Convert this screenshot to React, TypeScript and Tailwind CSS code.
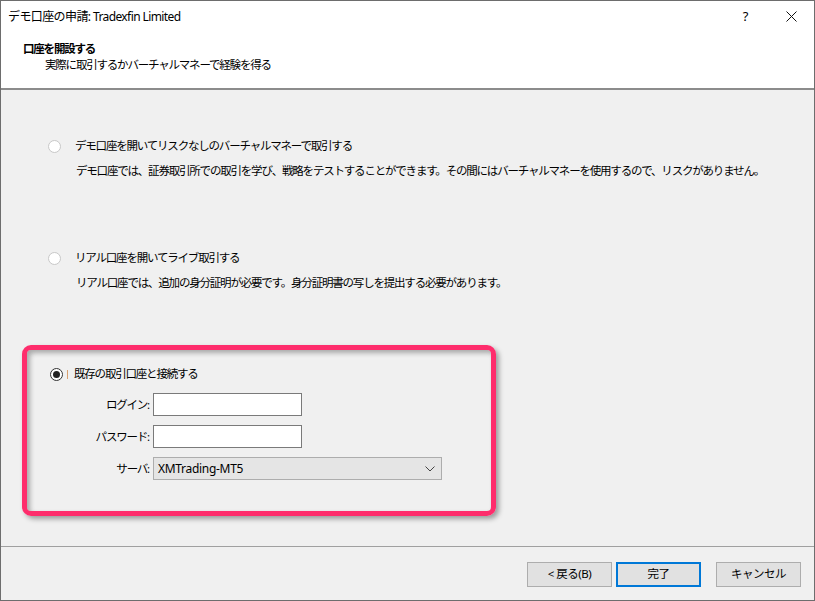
import React from 'react';

const font = { fontFamily: '"Segoe UI", "Noto Sans", "Noto Sans CJK JP", sans-serif' };

function Radio({ checked }: { checked?: boolean }) {
  return (
    <span
      className={
        'flex h-[13px] w-[13px] shrink-0 items-center justify-center rounded-full border bg-white ' +
        (checked ? 'border-[#333333]' : 'border-[#c8c8c8]')
      }
    >
      {checked && <span className="h-[7px] w-[7px] rounded-full bg-[#222222]" />}
    </span>
  );
}

function Field({ label, children }: { label: string; children: React.ReactNode }) {
  return (
    <div className="flex items-center">
      <span className="w-[152px] pr-[4px] text-right">{label}</span>
      {children}
    </div>
  );
}

function Button({ children, primary }: { children: React.ReactNode; primary?: boolean }) {
  return (
    <button
      className={
        'flex h-[25px] w-[85px] items-center justify-center bg-[#e1e1e1] tracking-[-0.5px] text-[#000] ' +
        (primary ? 'border-2 border-[#0078d7]' : 'border border-[#adadad]')
      }
    >
      {children}
    </button>
  );
}

export default function App() {
  return (
    <div
      className="relative flex h-[601px] w-[815px] flex-col overflow-hidden border border-[#6d6d6d] bg-[#f0f0f0] text-[11.5px] tracking-[-1.2px] text-[#000]"
      style={font}
    >
      {/* Title bar */}
      <div className="flex h-[31px] shrink-0 items-center bg-white pl-[7px]">
        <span className="flex-1 text-[12px] tracking-[-0.6px]">デモ口座の申請: Tradexfin Limited</span>
        <span className="w-[46px] text-center text-[13px]">?</span>
        <span className="flex w-[46px] items-center justify-center">
          <svg width="11" height="11" viewBox="0 0 11 11" stroke="#111" strokeWidth="1">
            <path d="M0.5 0.5 L10.5 10.5 M10.5 0.5 L0.5 10.5" />
          </svg>
        </span>
      </div>

      {/* Header */}
      <div className="flex h-[58px] shrink-0 flex-col border-b-2 border-[#8c8c8c] bg-white pl-[22px] pt-[9px]">
        <span className="font-bold leading-[16px]">口座を開設する</span>
        <span className="pl-[22px] leading-[16px]">実際に取引するかバーチャルマネーで経験を得る</span>
      </div>

      {/* Body */}
      <div className="relative flex flex-1 flex-col pl-[47px]">
        <div className="mt-[48px] flex items-center gap-[14px] leading-[16px]">
          <Radio />
          <span>デモ口座を開いてリスクなしのバーチャルマネーで取引する</span>
        </div>
        <div className="mt-[9px] pl-[28px] leading-[16px]">
          デモ口座では、証券取引所での取引を学び、戦略をテストすることができます。その間にはバーチャルマネーを使用するので、リスクがありません。
        </div>

        <div className="mt-[71px] flex items-center gap-[14px] leading-[16px]">
          <Radio />
          <span>リアル口座を開いてライブ取引する</span>
        </div>
        <div className="mt-[9px] pl-[28px] leading-[16px]">
          リアル口座では、追加の身分証明が必要です。身分証明書の写しを提出する必要があります。
        </div>

        <div className="mt-[75px] flex items-center leading-[16px]">
          <span className="ml-[2px]">
            <Radio checked />
          </span>
          <span className="ml-[4px] mr-[6px] h-[9px] w-px bg-[#d9a070]" />
          <span>既存の取引口座と接続する</span>
        </div>

        <div className="-ml-[47px] mt-[11px] flex flex-col gap-[9px]">
          <Field label="ログイン:">
            <span className="h-[23px] w-[149px] border border-[#7a7a7a] bg-white" />
          </Field>
          <Field label="パスワード:">
            <span className="h-[23px] w-[149px] border border-[#7a7a7a] bg-white" />
          </Field>
          <Field label="サーバ:">
            <span className="flex h-[23px] w-[289px] items-center justify-between border border-[#adadad] bg-[#e5e5e5] pl-[4px] pr-[6px] tracking-[-0.3px]">
              <span className="text-[12px]">XMTrading-MT5</span>
              <svg width="10" height="6" viewBox="0 0 10 6" fill="none" stroke="#444" strokeWidth="1">
                <path d="M0.5 0.5 L5 5 L9.5 0.5" />
              </svg>
            </span>
          </Field>
        </div>

        {/* annotation frame */}
        <div className="pointer-events-none absolute left-[21px] top-[255px] h-[171px] w-[474px] rounded-[9px] border-[5px] border-[#fe2d6c] shadow-[3px_3px_5px_rgba(0,0,0,0.35),inset_3px_3px_5px_rgba(0,0,0,0.3)]" />
      </div>

      {/* Footer */}
      <div className="flex h-[54px] shrink-0 items-center justify-end border-t border-[#a0a0a0] pr-[13px] pt-[1px]">
        <Button>&lt;&nbsp;戻る(B)</Button>
        <span className="w-[4px]" />
        <Button primary>完了</Button>
        <span className="w-[15px]" />
        <Button>キャンセル</Button>
      </div>
    </div>
  );
}
